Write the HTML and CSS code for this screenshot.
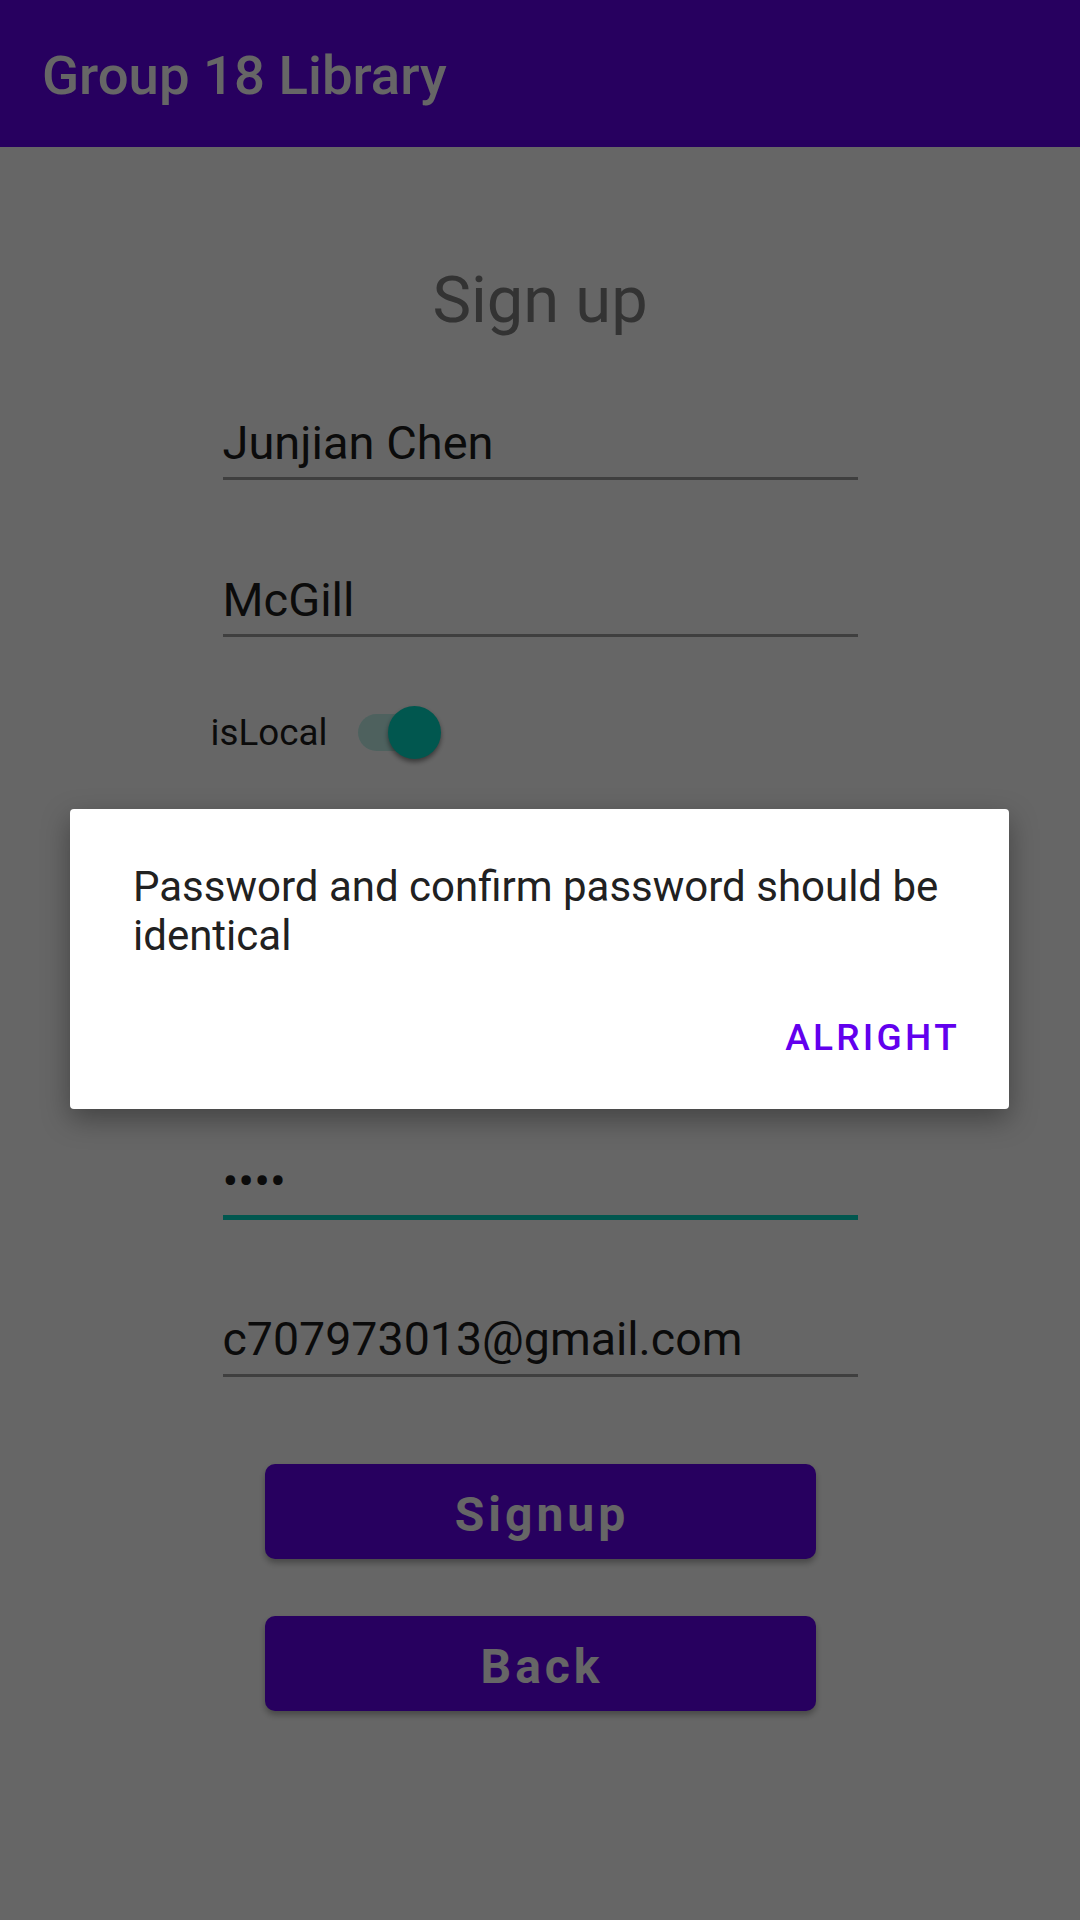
FILE: index.html
```html
<!DOCTYPE html>
<html lang="en">
<head>
<meta charset="utf-8">
<title>Group 18 Library</title>
<link rel="stylesheet" href="styles.css">
</head>
<body>
<header class="appbar">
  <h1 class="appbar-title">Group 18 Library</h1>
</header>
<main class="page">
  <h2 class="heading">Sign up</h2>
  <div class="form">
    <div class="field"><span class="field-text">Junjian Chen</span></div>
    <div class="field gap"><span class="field-text">McGill</span></div>
    <div class="switch-row">
      <span class="switch-label">isLocal</span>
      <span class="switch">
        <span class="switch-track"></span>
        <span class="switch-thumb"></span>
      </span>
    </div>
    <div class="field hidden-field"><span class="field-text">••••</span></div>
    <div class="field gap focused"><span class="field-text dots">••••</span></div>
    <div class="field gap"><span class="field-text email">c707973013@gmail.com</span></div>
  </div>
  <div class="actions">
    <button class="btn">Signup</button>
    <button class="btn btn-second">Back</button>
  </div>
</main>
<div class="scrim"></div>
<div class="dialog" role="alertdialog">
  <p class="dialog-msg">Password and confirm password should be identical</p>
  <div class="dialog-actions">
    <button class="dialog-btn">ALRIGHT</button>
  </div>
</div>
</body>
</html>
```
FILE: styles.css
```css
* { box-sizing: border-box; }
html, body {
  margin: 0;
  padding: 0;
}
body {
  width: 1080px;
  height: 1920px;
  overflow: hidden;
  background: #ffffff;
  font-family: Roboto, "Noto Sans", "Liberation Sans", sans-serif;
  position: relative;
}
.appbar {
  height: 147px;
  background: #6200EE;
  display: flex;
  align-items: center;
  padding: 2px 0 0 42px;
}
.appbar-title {
  margin: 0;
  font-size: 54.5px;
  font-weight: 500;
  color: #ffffff;
  line-height: 64px;
}
.page {
  display: flex;
  flex-direction: column;
  align-items: center;
}
.heading {
  margin: 115px 0 0;
  font-size: 65px;
  line-height: 76px;
  font-weight: 400;
  color: #808080;
  text-align: center;
}
.form {
  width: 635px;
  margin-top: 77px;
  display: flex;
  flex-direction: column;
}
.field {
  padding-bottom: 7px;
  border-bottom: 3px solid #9e9e9e;
}
.field.gap { margin-top: 92px; }
.field-text {
  display: block;
  font-size: 47px;
  line-height: 55px;
  color: #1c1c1c;
  white-space: nowrap;
}
.field-text.email { font-size: 46.5px; }
.field.focused {
  border-bottom: 5px solid #03DAC5;
}
.dots { letter-spacing: 0; }
.hidden-field { margin-top: 234px; }
.switch-row {
  margin: 65px 0 0 -12px;
  height: 60px;
  display: flex;
  align-items: center;
  gap: 30px;
}
.switch-label {
  font-size: 36.75px;
  color: #1c1c1c;
  width: 117px;
}
.switch {
  position: relative;
  width: 83px;
  height: 53px;
}
.switch-track {
  position: absolute;
  left: 0;
  top: 8px;
  width: 76px;
  height: 37px;
  border-radius: 19px;
  background: #C2F3EC;
}
.switch-thumb {
  position: absolute;
  right: 0;
  top: 0;
  width: 53px;
  height: 53px;
  border-radius: 50%;
  background: #03DAC5;
  box-shadow: 0 3px 5px rgba(0,0,0,0.45);
}
.actions {
  margin-top: 87px;
  display: flex;
  flex-direction: column;
  gap: 57px;
}
.btn {
  width: 551px;
  height: 95px;
  border: none;
  border-radius: 10px;
  background: #6200EE;
  color: #ffffff;
  font-family: Roboto, "Noto Sans", sans-serif;
  font-weight: 700;
  font-size: 48px;
  letter-spacing: 4px;
  padding: 5px 0 0 4px;
  box-shadow: 0 4px 6px rgba(0,0,0,0.3);
}
.scrim {
  position: absolute;
  inset: 0;
  background: rgba(0,0,0,0.6);
}
.dialog {
  position: absolute;
  left: 70px;
  top: 809px;
  width: 939px;
  height: 300px;
  background: #ffffff;
  border-radius: 4px;
  box-shadow: 0 10px 28px rgba(0,0,0,0.35);
  padding: 53px 40px 0 63px;
  display: flex;
  flex-direction: column;
}
.dialog-msg {
  margin: 0;
  font-size: 42px;
  line-height: 49px;
  color: #212121;
}
.dialog-actions {
  display: flex;
  justify-content: flex-end;
  margin-top: 56px;
  padding-right: 9px;
}
.dialog-btn {
  border: none;
  background: transparent;
  padding: 0;
  font-family: Roboto, "Noto Sans", sans-serif;
  font-weight: 500;
  font-size: 37px;
  letter-spacing: 3.3px;
  color: #6200EE;
  line-height: 44px;
}
```
